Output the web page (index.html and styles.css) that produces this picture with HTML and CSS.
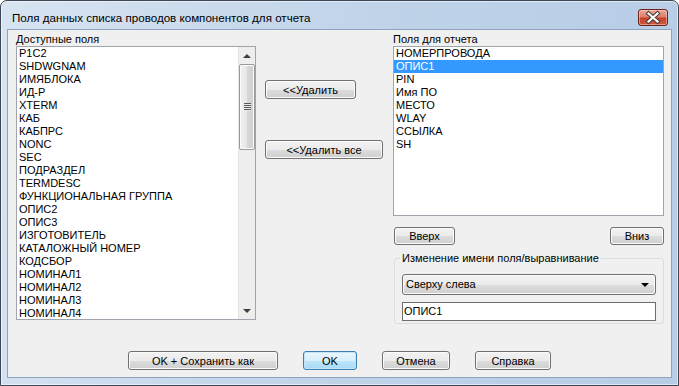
FILE: index.html
```html
<!DOCTYPE html>
<html lang="ru">
<head>
  <meta charset="UTF-8">
  <title>Поля данных списка проводов компонентов для отчета</title>
  <link rel="stylesheet" href="styles.css">
</head>
<body>

  <!-- Dialog window -->
  <div class="window">

    <!-- Title bar -->
    <div class="titlebar">
      <span class="title">Поля данных списка проводов компонентов для отчета</span>
      <span class="close">
        <svg width="28" height="15" viewBox="0 0 28 15">
          <path d="M9.5 3.5 L18.5 11.5 M18.5 3.5 L9.5 11.5" stroke="#4a3b3b" stroke-width="4.2" stroke-linecap="square" fill="none"/>
          <path d="M9.5 3.5 L18.5 11.5 M18.5 3.5 L9.5 11.5" stroke="#ffffff" stroke-width="2.2" stroke-linecap="square" fill="none"/>
        </svg>
      </span>
    </div>

    <!-- Client area -->
    <div class="client">
      <div class="main">

        <!-- Available fields -->
        <div class="col col-left">
          <div class="label">Доступные поля</div>
          <div class="listbox listbox-left">
            <ul class="items">
              <li>P1C2</li>
              <li>SHDWGNAM</li>
              <li>ИМЯБЛОКА</li>
              <li>ИД-Р</li>
              <li>XTERM</li>
              <li>КАБ</li>
              <li>КАБПРС</li>
              <li>NONC</li>
              <li>SEC</li>
              <li>ПОДРАЗДЕЛ</li>
              <li>TERMDESC</li>
              <li>ФУНКЦИОНАЛЬНАЯ ГРУППА</li>
              <li>ОПИС2</li>
              <li>ОПИС3</li>
              <li>ИЗГОТОВИТЕЛЬ</li>
              <li>КАТАЛОЖНЫЙ НОМЕР</li>
              <li>КОДСБОР</li>
              <li>НОМИНАЛ1</li>
              <li>НОМИНАЛ2</li>
              <li>НОМИНАЛ3</li>
              <li>НОМИНАЛ4</li>
            </ul>
            <div class="vscroll">
              <div class="arrow arrow-up"></div>
              <div class="track">
                <div class="thumb"><span class="grip"></span></div>
              </div>
              <div class="arrow arrow-down"></div>
            </div>
          </div>
        </div>

        <!-- Move buttons -->
        <div class="col col-mid">
          <button class="btn btn-remove">&lt;&lt;Удалить</button>
          <button class="btn btn-remove-all">&lt;&lt;Удалить все</button>
        </div>

        <!-- Report fields -->
        <div class="col col-right">
          <div class="label">Поля для отчета</div>
          <div class="listbox listbox-right">
            <ul class="items">
              <li>НОМЕРПРОВОДА</li>
              <li class="selected">ОПИС1</li>
              <li>PIN</li>
              <li>Имя ПО</li>
              <li>МЕСТО</li>
              <li>WLAY</li>
              <li>ССЫЛКА</li>
              <li>SH</li>
            </ul>
          </div>

          <div class="order-row">
            <button class="btn btn-up">Вверх</button>
            <button class="btn btn-down">Вниз</button>
          </div>

          <fieldset class="group">
            <legend>Изменение имени поля/выравнивание</legend>
            <div class="combo">Сверху слева<span class="caret"></span></div>
            <div class="textbox">ОПИС1</div>
          </fieldset>
        </div>
      </div>

      <!-- Dialog buttons -->
      <div class="footer">
        <button class="btn btn-save">OK + Сохранить как</button>
        <button class="btn btn-default btn-ok">OK</button>
        <button class="btn btn-cancel">Отмена</button>
        <button class="btn btn-help">Справка</button>
      </div>
    </div>
  </div>

</body>
</html>
```

FILE: styles.css
```css
* {
  box-sizing: border-box;
}

body {
  margin: 0;
  font-family: "Liberation Sans", Arial, sans-serif;
  font-size: 11px;
  color: #000;
  background: #fff;
}

/* window frame */
.window {
  width: 679px;
  height: 386px;
  border: 1px solid #3d4654;
  border-radius: 7px 7px 0 0;
  padding: 0 7px 8px 7px;
  display: flex;
  flex-direction: column;
  background:
    linear-gradient(100deg, rgba(255, 255, 255, 0.45) 0%, rgba(255, 255, 255, 0.1) 55%, rgba(255, 255, 255, 0) 100%),
    #b7cde6;
  box-shadow: inset 0 0 0 1px rgba(255, 255, 255, 0.55);
}

.titlebar {
  height: 29px;
  display: flex;
  align-items: flex-start;
}

.title {
  margin-top: 10px;
  padding-left: 4px;
  font-size: 11.6px;
  line-height: 14px;
  color: #000;
}

.close {
  margin-left: auto;
  margin-top: 8px;
  margin-right: 3px;
  width: 30px;
  height: 17px;
  border: 1px solid #6a2418;
  border-radius: 3px;
  background: linear-gradient(#eaa898 0%, #dc7e6a 48%, #c4412a 52%, #cf5a3f 100%);
  box-shadow: inset 0 0 0 1px rgba(255, 220, 210, 0.5);
}

.close svg {
  display: block;
}

/* client area */
.client {
  flex: 1;
  display: flex;
  flex-direction: column;
  background: #f0f0f0;
  box-shadow: 0 0 0 1px #8ea3bd;
}

.main {
  display: flex;
  padding: 3px 0 0 8px;
}

.label {
  height: 13px;
  line-height: 13px;
  white-space: nowrap;
}

.listbox {
  border: 1px solid #a0a5ad;
  background: #fff;
  display: flex;
}

.listbox-left {
  width: 240px;
  height: 274px;
}

.listbox-right {
  width: 271px;
  height: 170px;
}

.items {
  flex: 1;
  margin: 0;
  padding: 0;
  list-style: none;
  overflow: hidden;
}

.items li {
  height: 13px;
  line-height: 13px;
  padding-left: 2px;
  white-space: nowrap;
}

.items li.selected {
  background: #3399ff;
  color: #fff;
}

/* scrollbar */
.vscroll {
  width: 17px;
  display: flex;
  flex-direction: column;
  background: #eeeeee;
  border-left: 1px solid #e4e4e4;
}

.arrow {
  height: 17px;
  position: relative;
}

.arrow::after {
  content: "";
  position: absolute;
  left: 4px;
  border-left: 4px solid transparent;
  border-right: 4px solid transparent;
}

.arrow-up::after {
  top: 7px;
  border-bottom: 4px solid #3e3e3e;
}

.arrow-down::after {
  top: 7px;
  border-top: 4px solid #3e3e3e;
}

.track {
  flex: 1;
}

.thumb {
  height: 86px;
  border: 1px solid #9a9a9a;
  border-radius: 2px;
  background: linear-gradient(90deg, #f1f1f1 0%, #e6e6e6 50%, #d7d7d7 51%, #d0d0d0 100%);
  box-shadow: inset 0 0 0 1px #fafafa;
  display: flex;
  align-items: center;
  justify-content: center;
}

.grip {
  width: 7px;
  height: 8px;
  background: repeating-linear-gradient(#5a5a5a 0, #5a5a5a 1px, #e8e8e8 1px, #e8e8e8 2px);
}

/* middle column */
.col-mid {
  width: 137px;
  padding-left: 9px;
  display: flex;
  flex-direction: column;
  align-items: flex-start;
}

.btn {
  height: 19px;
  padding: 0;
  font-family: "Liberation Sans", Arial, sans-serif;
  font-size: 11px;
  color: #000;
  border: 1px solid #707070;
  border-radius: 3px;
  background: linear-gradient(#f2f2f2 0%, #ebebeb 50%, #dddddd 51%, #cfcfcf 100%);
  box-shadow: inset 0 0 0 1px #fbfbfb;
}

.btn-remove {
  margin-top: 47px;
  width: 91px;
}

.btn-remove-all {
  margin-top: 41px;
  width: 118px;
}

/* right column */
.col-right {
  width: 271px;
}

.order-row {
  display: flex;
  justify-content: space-between;
  margin-top: 11px;
  padding-left: 1px;
}

.btn-up {
  width: 61px;
  height: 18px;
}

.btn-down {
  width: 54px;
  height: 18px;
}

.group {
  margin: 7px 0 0 1px;
  width: 270px;
  height: 72px;
  padding: 9px 7px 0 7px;
  border: 1px solid #d5dfe5;
  border-radius: 3px;
}

.group legend {
  margin-left: -2px;
  padding: 0 2px;
  line-height: 13px;
  color: #000;
}

.combo {
  position: relative;
  height: 21px;
  line-height: 19px;
  padding-left: 3px;
  border: 1px solid #707070;
  border-radius: 3px;
  background: linear-gradient(#f2f2f2 0%, #ebebeb 50%, #dddddd 51%, #cfcfcf 100%);
  box-shadow: inset 0 0 0 1px #fbfbfb;
}

.caret {
  position: absolute;
  right: 6px;
  top: 8px;
  border-left: 4px solid transparent;
  border-right: 4px solid transparent;
  border-top: 4px solid #000;
}

.textbox {
  margin-top: 7px;
  height: 19px;
  line-height: 17px;
  padding-left: 1px;
  border: 1px solid #6e6e6e;
  background: #fff;
}

/* bottom buttons */
.footer {
  margin-top: auto;
  display: flex;
  justify-content: center;
  gap: 25px;
  padding-bottom: 7px;
}

.btn-save {
  width: 150px;
}

.btn-ok {
  width: 54px;
}

.btn-cancel {
  width: 68px;
}

.btn-help {
  width: 76px;
}

.btn-default {
  border-color: #3c7fb1;
  background: linear-gradient(#eaf6fd 0%, #d9f0fc 50%, #bee6fd 51%, #a7d9f5 100%);
  box-shadow: inset 0 0 0 1px #c4e5f6;
}
```
